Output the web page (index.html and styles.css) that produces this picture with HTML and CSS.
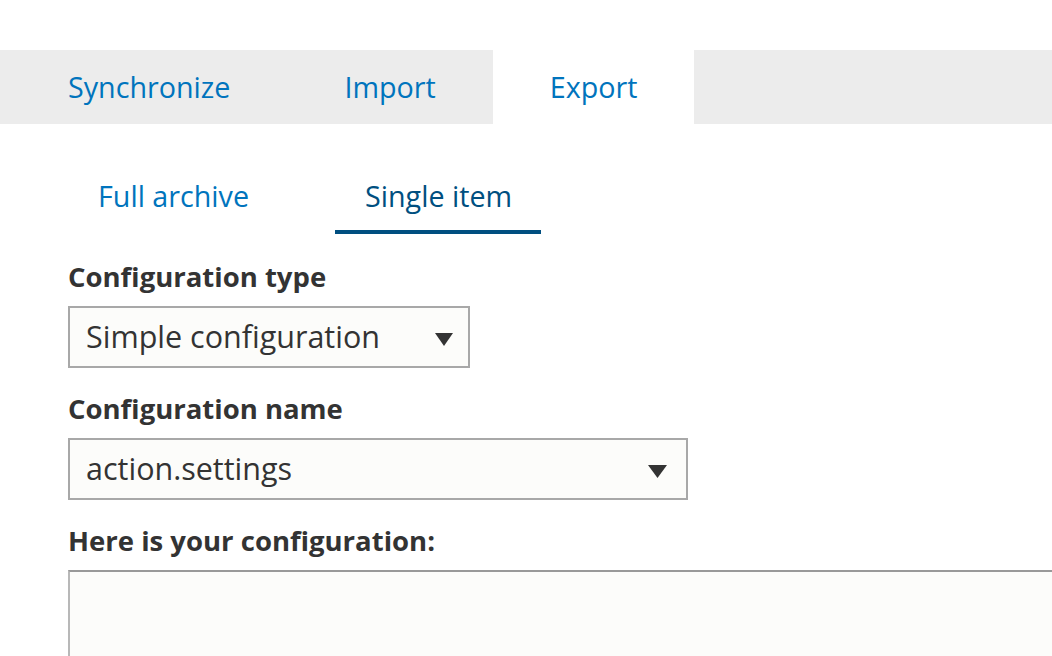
FILE: index.html
```html
<!DOCTYPE html>
<html lang="en">
  <head>
    <meta charset="UTF-8" />
    <meta name="viewport" content="width=device-width, initial-scale=1.0" />
    <title>Export</title>
    <link rel="stylesheet" href="styles.css">
  </head>
  <body>
    <!-- primary tabs -->
    <ul class="tabs-primary">
      <li><a href="#">Synchronize</a></li>
      <li><a href="#">Import</a></li>
      <li class="is-active"><a href="#">Export</a></li>
    </ul>

    <!-- secondary tabs -->
    <ul class="tabs-secondary">
      <li><a href="#">Full archive</a></li>
      <li class="is-active"><a href="#">Single item</a></li>
    </ul>

    <form class="export-form">
      <div class="form-item">
        <label>Configuration type</label>
        <div class="select select-type">
          <span>Simple configuration</span>
          <svg width="18" height="13" viewBox="0 0 18 13"><path d="M0 0h18L9 13z" fill="#333"/></svg>
        </div>
      </div>

      <div class="form-item">
        <label>Configuration name</label>
        <div class="select select-name">
          <span>action.settings</span>
          <svg width="19" height="13" viewBox="0 0 19 13"><path d="M0 0h19L9.5 13z" fill="#333"/></svg>
        </div>
      </div>

      <div class="form-item">
        <label>Here is your configuration:</label>
        <textarea class="config-text"></textarea>
      </div>
    </form>
  </body>
</html>
```

FILE: styles.css
```css
* {
  margin: 0;
  padding: 0;
  box-sizing: border-box;
}
ul {
  list-style: none;
}
a {
  text-decoration: none;
  color: #0074bd;
}
html,
body {
  overflow: hidden;
}
body {
  font-family: "Open Sans", "Liberation Sans", sans-serif;
  color: #333;
  background: #fff;
}

/* primary tabs */
.tabs-primary {
  display: flex;
  margin-top: 50px;
  padding-left: 11px;
  background-color: #ececec;
}
.tabs-primary a {
  display: block;
  padding: 0 57px;
  font-size: 28.7px;
  line-height: 74px;
}
.tabs-primary .is-active {
  background-color: #fff;
}

/* secondary tabs */
.tabs-secondary {
  display: flex;
  gap: 57px;
  margin: 52px 0 0 68px;
}
.tabs-secondary a {
  display: block;
  padding: 0 29px 14px 30px;
  font-size: 28.7px;
  line-height: 40px;
  border-bottom: 4px solid transparent;
}
.tabs-secondary .is-active a {
  color: #004f80;
  border-bottom-color: #004f80;
}

/* form */
.export-form {
  padding: 25px 0 0 68px;
}
.form-item {
  margin-bottom: 23px;
}
.form-item label {
  display: block;
  margin-bottom: 11px;
  font-size: 27.5px;
  font-weight: bold;
  line-height: 36px;
}
.select {
  display: flex;
  align-items: center;
  justify-content: space-between;
  height: 62px;
  padding: 0 15px 2px 16px;
  border: 2px solid #a8a8a8;
  background-color: #fcfcfa;
  font-size: 30.5px;
  color: #333;
}
.select svg {
  margin-top: 6px;
}
.select-type {
  width: 402px;
}
.select-name {
  width: 620px;
  padding-right: 19px;
}
.config-text {
  display: block;
  width: 1100px;
  height: 300px;
  border: 2px solid #b8b8b8;
  border-top-color: #999;
  background-color: #fcfcfa;
  resize: none;
}
```
